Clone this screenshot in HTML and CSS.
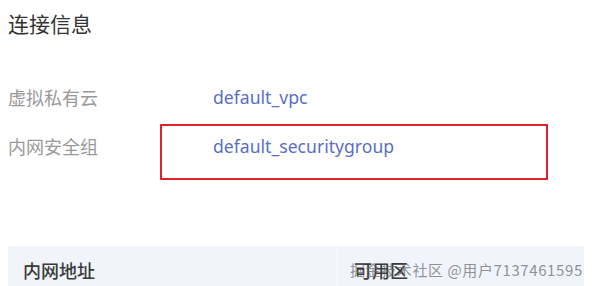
FILE: index.html
```html
<!DOCTYPE html>
<html lang="zh">
<head>
<meta charset="utf-8">
<link rel="stylesheet" href="styles.css">
</head>
<body>
<div class="page">
  <h2 class="title">连接信息</h2>
  <div class="info">
    <div class="row"><span class="label">虚拟私有云</span><span class="value">default_vpc</span></div>
    <div class="row"><span class="label">内网安全组</span><span class="value">default_securitygroup</span></div>
    <div class="highlight"></div>
  </div>
  <div class="table">
    <div class="th th-first">内网地址</div>
    <div class="th th-second">可用区</div>
  </div>
  <div class="watermark">掘金技术社区 @用户7137461595</div>
</div>
</body>
</html>
```
FILE: styles.css
```css
* { box-sizing: border-box; }
html, body { margin: 0; padding: 0; background: #fff; }
body { width: 597px; height: 286px; overflow: hidden; font-family: "Noto Sans", "Noto Sans CJK SC", sans-serif; }
.page { position: relative; padding: 0 13px 0 8px; }
.title { margin: 0; padding-top: 9px; height: 62px; font-size: 21px; font-weight: 400; line-height: 28px; color: #333; font-family: "Noto Sans CJK SC", sans-serif; }
.info { position: relative; padding-top: 10px; }
.row { display: flex; align-items: center; height: 49px; }
.label { width: 205px; font-size: 18px; color: #999; font-family: "Noto Sans CJK SC", sans-serif; }
.value { font-size: 17.6px; color: #5a6ec4; }
.highlight { position: absolute; left: 152px; top: 62px; width: 388px; height: 56px; border: 2.5px solid #e1222f; }
.table { display: flex; margin-top: 76px; height: 48px; width: 576px; background: #f1f4fb; }
.th { display: flex; align-items: center; font-size: 18px; color: #3a3a3a; font-family: "Noto Sans CJK SC", sans-serif; font-weight: 500; }
.th-first { width: 330px; padding-left: 15px; border-right: 1px solid #fafbfe; }
.th-second { padding-left: 16px; flex: 1; }
.watermark { position: absolute; left: 350px; top: 259px; font-size: 15px; color: rgba(100,100,100,0.7); font-family: "Noto Sans CJK SC", sans-serif; white-space: nowrap; letter-spacing: 0.6px; }
```
